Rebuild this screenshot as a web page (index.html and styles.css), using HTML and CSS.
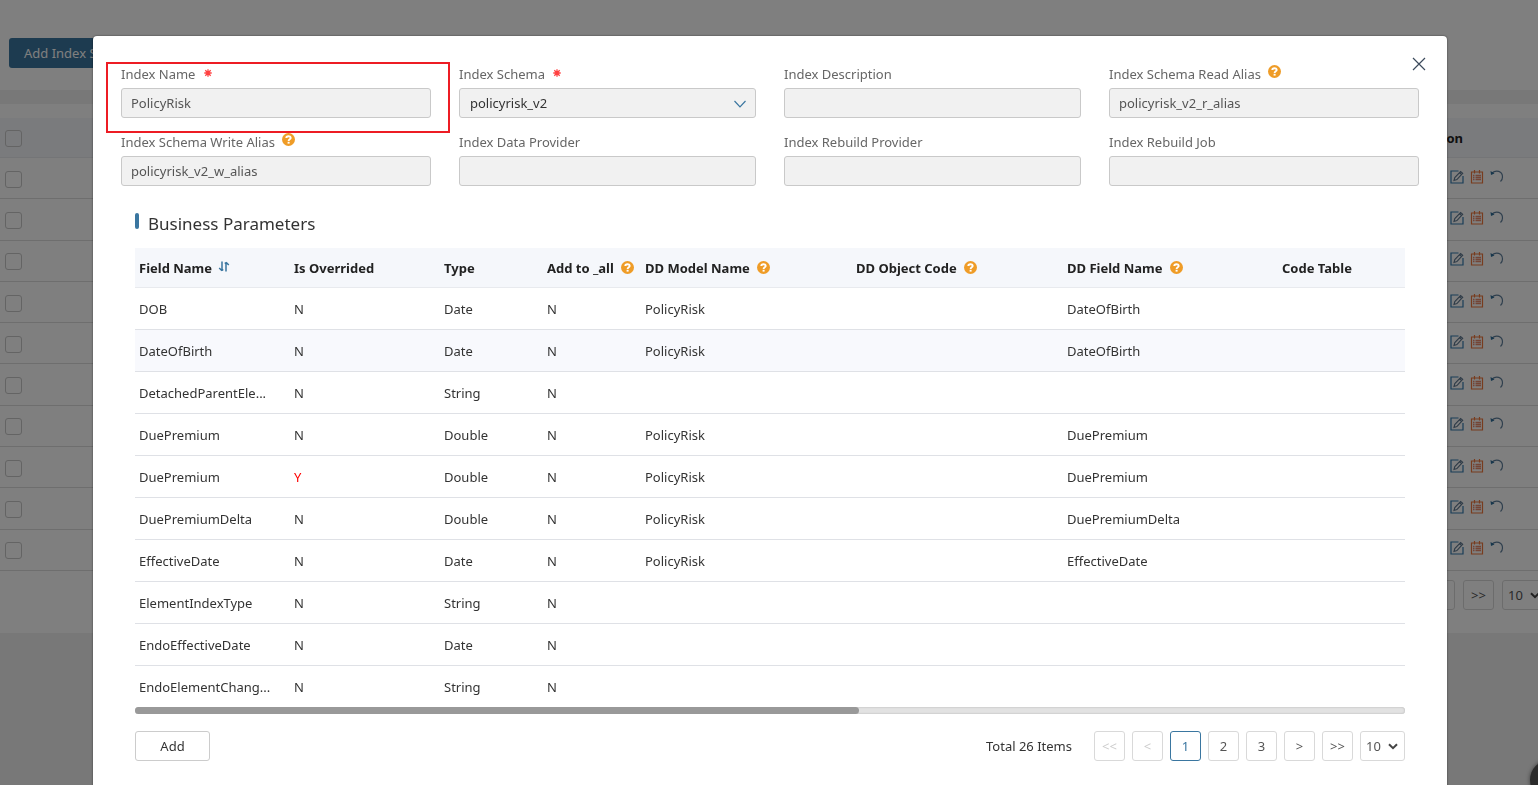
FILE: index.html
```html
<!DOCTYPE html>
<html lang="en">
<head>
    <meta charset="UTF-8">
    <meta name="viewport" content="width=device-width, initial-scale=1.0">
    <title>Index Schema</title>
    <link rel="stylesheet" href="styles.css">
</head>

<body>
    <!-- icons -->
    <svg class="sprite" aria-hidden="true">
        <symbol id="i-help" viewBox="0 0 13 13">
            <circle cx="6.5" cy="6.5" r="6.5" fill="#ef9c27"/>
            <path d="M4.3 5 C4.3 2.7 8.7 2.7 8.7 4.9 C8.7 6.3 6.6 6.2 6.6 7.9" fill="none" stroke="#fff" stroke-width="1.9"/>
            <rect x="5.6" y="8.8" width="2" height="1.8" fill="#fff"/>
        </symbol>
        <symbol id="i-star" viewBox="0 0 8 8">
            <path d="M4 0.3V7.7M0.3 4H7.7M1.3 1.3L6.7 6.7M6.7 1.3L1.3 6.7" stroke="#ff4040" stroke-width="1.3"/>
        </symbol>
        <symbol id="i-edit" viewBox="0 0 14 14">
            <path d="M8.5 1H1V13H13V6" fill="none" stroke="#337ab0" stroke-width="1.2"/>
            <path d="M4 10.5L4.8 7.6L10.6 1.5L12.7 3.2L6.9 9.6ZM9.4 2.8L11.5 4.5" fill="none" stroke="#5f7890" stroke-width="1.1"/>
        </symbol>
        <symbol id="i-list" viewBox="0 0 14 14">
            <path d="M1.5 2H12.5V13H1.5ZM4.5 0V3.5M9.5 0V3.5" fill="none" stroke="#f0783c" stroke-width="1.2"/>
            <path d="M3 5.6H4.5M3 7.6H4.5M3 9.6H4.5M5.5 5.6H11M5.5 7.6H11M5.5 9.6H11" stroke="#e88a6c" stroke-width="1.5"/>
        </symbol>
        <symbol id="i-undo" viewBox="0 0 14 14">
            <path d="M2 3C6-0.5 12.5 1 12.5 7C12.5 9 11.7 10.4 10.5 11.5" fill="none" stroke="#5f7f9c" stroke-width="1.2"/>
            <path d="M0.5 1L1 5L4.5 3.6Z" fill="#2c6c98"/>
        </symbol>
        <symbol id="i-sort" viewBox="0 0 12 12">
            <path d="M4 0.5V9M1.2 7L4 9.8M8 10.5V1.6M8 1.2L10.8 4M4 9.5L5.2 8.4M8 1.5L6.8 2.6" fill="none" stroke="#3a76a0" stroke-width="1.5"/>
        </symbol>
        <symbol id="i-down" viewBox="0 0 12 8">
            <path d="M0.5 1L6 6.8L11.5 1" fill="none" stroke="#3a76a0" stroke-width="1.2"/>
        </symbol>
        <symbol id="i-caret" viewBox="0 0 10 7">
            <path d="M1 1.2L5 5.2L9 1.2" fill="none" stroke="#444" stroke-width="2"/>
        </symbol>
    </svg>

    <!-- page behind the dialog -->
    <div class="page">
        <div class="toolbar">
            <button class="btn-primary">Add Index Schema</button>
        </div>
        <div class="panel">
            <table class="index-table">
                <thead>
                    <tr>
                        <th class="check"><input type="checkbox" aria-label="Select all"></th>
                        <th class="action">Action</th>
                    </tr>
                </thead>
                <tbody id="indexRows"></tbody>
            </table>
            <div class="page-pager">
                <button>&gt;</button>
                <button>&gt;&gt;</button>
                <span class="page-size">
                    <select aria-label="Rows per page"><option>10</option></select>
                    <svg><use href="#i-caret"/></svg>
                </span>
            </div>
        </div>
    </div>

    <div class="overlay"></div>
    <div class="float-btn"></div>

    <div class="dialog" role="dialog" aria-label="Index">
        <button class="close" aria-label="Close">
            <svg viewBox="0 0 14 14"><path d="M1 1L13 13M13 1L1 13" stroke="#3c4a5c" stroke-width="1.2"/></svg>
        </button>

        <form class="fields">
            <div class="field marked">
                <label for="name">Index Name <svg class="star"><use href="#i-star"/></svg></label>
                <input id="name" type="text" value="PolicyRisk" disabled>
            </div>
            <div class="field">
                <label for="schema">Index Schema <svg class="star"><use href="#i-star"/></svg></label>
                <div class="select-box">
                    <select id="schema" disabled><option>policyrisk_v2</option></select>
                    <svg><use href="#i-down"/></svg>
                </div>
            </div>
            <div class="field">
                <label for="desc">Index Description</label>
                <input id="desc" type="text" disabled>
            </div>
            <div class="field">
                <label for="read">Index Schema Read Alias <svg class="help"><use href="#i-help"/></svg></label>
                <input id="read" type="text" value="policyrisk_v2_r_alias" disabled>
            </div>
            <div class="field">
                <label for="write">Index Schema Write Alias <svg class="help"><use href="#i-help"/></svg></label>
                <input id="write" type="text" value="policyrisk_v2_w_alias" disabled>
            </div>
            <div class="field">
                <label for="data">Index Data Provider</label>
                <input id="data" type="text" disabled>
            </div>
            <div class="field">
                <label for="rebuild">Index Rebuild Provider</label>
                <input id="rebuild" type="text" disabled>
            </div>
            <div class="field">
                <label for="job">Index Rebuild Job</label>
                <input id="job" type="text" disabled>
            </div>
        </form>

        <div class="params">
            <h2>Business Parameters</h2>
            <table class="param-table">
                <colgroup>
                    <col class="c-name"><col class="c-over"><col class="c-type"><col class="c-all">
                    <col class="c-model"><col class="c-model"><col class="c-field"><col>
                </colgroup>
                <thead>
                    <tr>
                        <th>Field Name <svg class="sort"><use href="#i-sort"/></svg></th>
                        <th>Is Overrided</th>
                        <th>Type</th>
                        <th>Add to _all <svg class="help"><use href="#i-help"/></svg></th>
                        <th>DD Model Name <svg class="help"><use href="#i-help"/></svg></th>
                        <th>DD Object Code <svg class="help"><use href="#i-help"/></svg></th>
                        <th>DD Field Name <svg class="help"><use href="#i-help"/></svg></th>
                        <th>Code Table</th>
                    </tr>
                </thead>
                <tbody id="paramRows"></tbody>
            </table>
            <div class="scroll"><div class="thumb"></div></div>

            <div class="footer">
                <button class="btn-add">Add</button>
                <div class="pager">
                    <span class="total">Total 26 Items</span>
                    <button disabled>&lt;&lt;</button>
                    <button disabled>&lt;</button>
                    <button class="current">1</button>
                    <button>2</button>
                    <button>3</button>
                    <button>&gt;</button>
                    <button>&gt;&gt;</button>
                    <span class="page-size">
                        <select aria-label="Items per page"><option>10</option></select>
                        <svg><use href="#i-caret"/></svg>
                    </span>
                </div>
            </div>
        </div>
    </div>

    <script>
        const params = [
            ['DOB', 'N', 'Date', 'N', 'PolicyRisk', '', 'DateOfBirth', ''],
            ['DateOfBirth', 'N', 'Date', 'N', 'PolicyRisk', '', 'DateOfBirth', ''],
            ['DetachedParentEle...', 'N', 'String', 'N', '', '', '', ''],
            ['DuePremium', 'N', 'Double', 'N', 'PolicyRisk', '', 'DuePremium', ''],
            ['DuePremium', 'Y', 'Double', 'N', 'PolicyRisk', '', 'DuePremium', ''],
            ['DuePremiumDelta', 'N', 'Double', 'N', 'PolicyRisk', '', 'DuePremiumDelta', ''],
            ['EffectiveDate', 'N', 'Date', 'N', 'PolicyRisk', '', 'EffectiveDate', ''],
            ['ElementIndexType', 'N', 'String', 'N', '', '', '', ''],
            ['EndoEffectiveDate', 'N', 'Date', 'N', '', '', '', ''],
            ['EndoElementChang...', 'N', 'String', 'N', '', '', '', '']
        ]
        let html = ''
        params.forEach((row, i) => {
            html += i == 1 ? '<tr class="active">' : '<tr>'
            row.forEach(v => { html += (v == 'Y' ? '<td class="yes">' : '<td>') + v + '</td>' })
            html += '</tr>'
        })
        document.getElementById('paramRows').innerHTML = html

        html = ''
        for (let i = 0; i < 10; i++) {
            html += '<tr><td class="check"><input type="checkbox" aria-label="Select row"></td><td class="action"><div class="icons">'
            for (const n of ['edit', 'list', 'undo']) {
                html += '<button aria-label="' + n + '"><svg><use href="#i-' + n + '"/></svg></button>'
            }
            html += '</div></td></tr>'
        }
        document.getElementById('indexRows').innerHTML = html
    </script>
</body>
</html>
```

FILE: styles.css
```css
* {
    box-sizing: border-box;
}
body {
    margin: 0;
    overflow: hidden;
    background-color: #f1f1f1;
    font-family: "Noto Sans", "Open Sans", sans-serif;
    font-size: 13px;
    line-height: 20px;
    color: #333;
}
button, input, select {
    font: inherit;
    color: inherit;
}
table {
    width: 100%;
    border-collapse: separate;
    border-spacing: 0;
    table-layout: fixed;
}
th {
    text-align: left;
    font-weight: bold;
    color: #222;
}
.sprite {
    position: absolute;
    width: 0;
    height: 0;
}

/* page */
.toolbar {
    height: 90px;
    padding: 38px 9px 0;
    background-color: #fff;
}
.btn-primary {
    height: 30px;
    padding: 0 15px;
    border: none;
    border-radius: 3px;
    background-color: #3a76a0;
    color: #fff;
}
.panel {
    margin-top: 14px;
    padding: 14px 0 23px;
    background-color: #fff;
}
.index-table {
    height: 453px;
}
.index-table th {
    height: 40px;
    padding: 0;
    background-color: #f5f7fb;
    border-bottom: 1px solid #e8eaee;
}
.index-table td {
    padding: 0;
    border-bottom: 1px solid #dcdcdc;
}
.index-table .check {
    padding-left: 5px;
}
.index-table th.action {
    padding-right: 75px;
    text-align: right;
}
.check input {
    display: block;
    appearance: none;
    width: 17px;
    height: 17px;
    margin: 2px 0 0;
    border: 1px solid #c8c8c8;
    border-radius: 3px;
}
.icons {
    display: flex;
    justify-content: flex-end;
    gap: 6px;
    padding: 0 34px 3px 0;
}
.icons button {
    width: 14px;
    height: 14px;
    padding: 0;
    border: none;
    background: none;
}
.icons svg {
    display: block;
    width: 14px;
    height: 14px;
}
.page-pager {
    display: flex;
    justify-content: flex-end;
    gap: 8px;
    margin: 9px -9px 0 0;
}

.overlay {
    position: fixed;
    inset: 0;
    background-color: rgba(0, 0, 0, 0.5);
}
.float-btn {
    position: fixed;
    right: -32px;
    bottom: -15px;
    width: 40px;
    height: 40px;
    border-radius: 50%;
    background-color: #2b2b2b;
    box-shadow: 0 0 4px rgba(0, 0, 0, 0.5);
}

/* dialog */
.dialog {
    position: absolute;
    top: 36px;
    left: 93px;
    right: 91px;
    min-height: 100vh;
    padding: 26px 28px;
    border-radius: 4px;
    background-color: #fff;
    box-shadow: 0 0 2px rgba(0, 0, 0, 0.6);
}
.close {
    position: absolute;
    top: 21px;
    right: 21px;
    width: 14px;
    height: 14px;
    padding: 0;
    border: none;
    background: none;
}
.close svg {
    display: block;
}
.fields {
    display: grid;
    grid-template-columns: 310fr 297fr 297fr 310fr;
    gap: 12px 28px;
}
.field {
    position: relative;
}
.field label {
    display: block;
    height: 26px;
    line-height: 24px;
    color: #666;
}
.field input, .field select {
    display: block;
    width: 100%;
    height: 30px;
    padding: 0 9px;
    border: 1px solid #c9c9c9;
    border-radius: 3px;
    background-color: #f1f1f1;
    color: #555;
}
.field select {
    appearance: none;
    padding: 0 10px;
    color: #333;
    opacity: 1;
}
.marked::after {
    content: "";
    position: absolute;
    top: 0;
    left: -15px;
    right: -19px;
    bottom: -15px;
    border: 2px solid #ed1c24;
}
.select-box {
    position: relative;
}
.select-box svg {
    position: absolute;
    right: 10px;
    top: 12px;
    width: 12px;
    height: 8px;
}
.star {
    width: 8px;
    height: 8px;
    margin-left: 5px;
    vertical-align: 2px;
}
.help {
    width: 13px;
    height: 13px;
    margin-left: 4px;
    vertical-align: -1px;
}
.field .help {
    vertical-align: 1px;
}
.sort {
    width: 12px;
    height: 12px;
    margin-left: 3px;
    vertical-align: 0;
}

.params {
    padding: 0 14px;
}
h2 {
    display: flex;
    align-items: center;
    gap: 9px;
    height: 62px;
    margin: 0;
    padding-top: 14px;
    font-size: 17px;
    font-weight: normal;
}
h2::before {
    content: "";
    width: 4px;
    height: 16px;
    margin-bottom: 6px;
    border-radius: 2px;
    background-color: #3a76a0;
}
.param-table th {
    height: 40px;
    padding: 0 0 0 4px;
    background-color: #f5f7fb;
    border-bottom: 1px solid #e8eaee;
    white-space: nowrap;
}
.param-table td {
    height: 42px;
    padding: 0 4px;
    border-bottom: 1px solid #dfe1e6;
    white-space: nowrap;
}
.param-table tr:last-child td {
    border-bottom: none;
}
.param-table .active td {
    background-color: #f8f9fd;
}
.param-table .yes {
    color: #f00;
}
.c-name { width: 155px; }
.c-over { width: 150px; }
.c-type { width: 103px; }
.c-all { width: 98px; }
.c-model { width: 211px; }
.c-field { width: 215px; }

.scroll {
    height: 7px;
    margin-top: -1px;
    border-radius: 4px;
    background-color: #e2e2e2;
    box-shadow: inset 0 0 2px #aaa;
}
.thumb {
    width: 57%;
    height: 7px;
    border-radius: 4px;
    background-color: #999;
}

.footer {
    display: flex;
    justify-content: space-between;
    margin-top: 17px;
}
.btn-add {
    width: 75px;
    height: 30px;
    border: 1px solid #ccc;
    border-radius: 3px;
    background-color: #fff;
}
.pager {
    display: flex;
    align-items: center;
    gap: 7px;
}
.total {
    margin-right: 15px;
}
.pager button, .page-pager button {
    width: 31px;
    height: 30px;
    padding: 0;
    border: 1px solid #d9d9d9;
    border-radius: 3px;
    background-color: #fff;
    color: #555;
}
.pager button:disabled {
    color: #ccc;
}
.pager .current {
    border-color: #3a76a0;
    color: #3a76a0;
}
.page-size {
    position: relative;
}
.page-size select {
    display: block;
    appearance: none;
    width: 45px;
    height: 30px;
    padding: 0 5px;
    border: 1px solid #d9d9d9;
    border-radius: 3px;
    background-color: #fff;
    color: #555;
}
.page-size svg {
    position: absolute;
    right: 7px;
    top: 12px;
    width: 10px;
    height: 7px;
}
```
